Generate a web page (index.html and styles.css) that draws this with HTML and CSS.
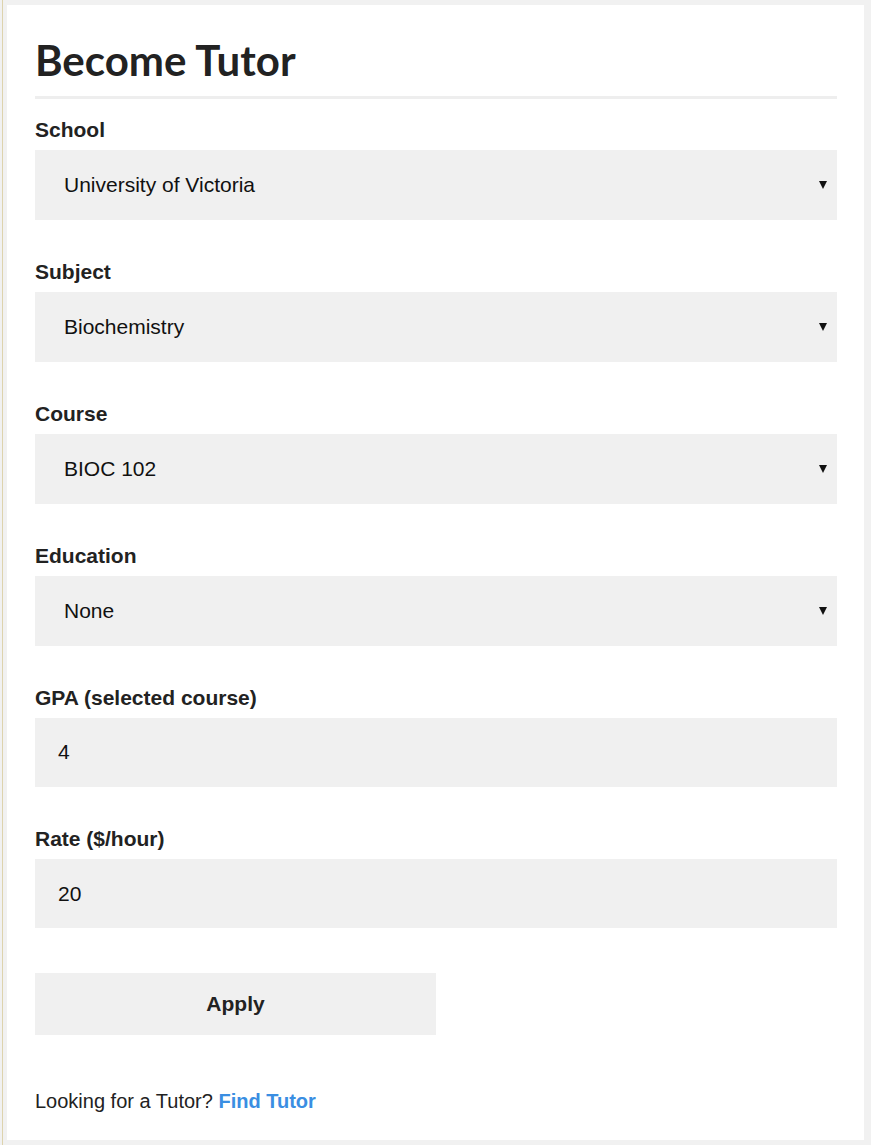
FILE: index.html
```html
<!DOCTYPE html>
<html lang="en">
<head>
<meta charset="utf-8">
<title>Become Tutor</title>
<link rel="stylesheet" href="styles.css">
</head>
<body>
<main class="card">
  <h1 class="title">Become Tutor</h1>
  <form class="form">
    <div class="field">
      <label class="label" for="school">School</label>
      <div class="select-wrap">
        <select id="school" class="control select"><option>University of Victoria</option></select>
      </div>
    </div>
    <div class="field">
      <label class="label" for="subject">Subject</label>
      <div class="select-wrap">
        <select id="subject" class="control select"><option>Biochemistry</option></select>
      </div>
    </div>
    <div class="field">
      <label class="label" for="course">Course</label>
      <div class="select-wrap">
        <select id="course" class="control select"><option>BIOC 102</option></select>
      </div>
    </div>
    <div class="field">
      <label class="label" for="education">Education</label>
      <div class="select-wrap">
        <select id="education" class="control select"><option>None</option></select>
      </div>
    </div>
    <div class="field field-input">
      <label class="label" for="gpa">GPA (selected course)</label>
      <input id="gpa" class="control input" type="text" value="4">
    </div>
    <div class="field field-input">
      <label class="label" for="rate">Rate ($/hour)</label>
      <input id="rate" class="control input" type="text" value="20">
    </div>
    <button class="apply" type="button">Apply</button>
  </form>
  <p class="footer">Looking for a Tutor? <a class="link" href="#">Find Tutor</a></p>
</main>
</body>
</html>
```

FILE: styles.css
```css
html {
  background: #f1f1f1;
}
body {
  margin: 0 0 0 2px;
  border-left: 1px solid #ddd3ad;
  padding: 5px 7px 5px 4px;
  font-family: "Liberation Sans", Arial, sans-serif;
  color: #222;
}
.card {
  background: #fff;
  padding: 30px 27px 27px 28px;
}
.title {
  margin: 0;
  font-family: Lato, "Liberation Sans", sans-serif;
  font-weight: 700;
  font-size: 42px;
  line-height: 1.2;
  color: #222;
  padding-bottom: 11px;
  border-bottom: 3px solid #eeeeee;
}
.form {
  display: flex;
  flex-direction: column;
  padding-top: 18.5px;
}
.field {
  display: flex;
  flex-direction: column;
  gap: 8px;
  margin-bottom: 40px;
}
.field-input {
  margin-bottom: 40.5px;
}
.label {
  display: block;
  font-weight: 700;
  font-size: 21px;
  line-height: 24px;
  color: #222;
}
.select-wrap {
  position: relative;
}
.select-wrap::after {
  content: "";
  position: absolute;
  right: 10px;
  top: 31px;
  width: 0;
  height: 0;
  border-left: 4px solid transparent;
  border-right: 4px solid transparent;
  border-top: 8px solid #111;
  pointer-events: none;
}
.control {
  display: block;
  width: 100%;
  box-sizing: border-box;
  border: 0;
  margin: 0;
  background: #f0f0f0;
  font-family: "Liberation Sans", Arial, sans-serif;
  font-size: 21px;
  color: #111;
  outline: none;
  border-radius: 0;
}
.select {
  -webkit-appearance: none;
  appearance: none;
  height: 70px;
  padding: 0 30px 0 29px;
}
.input {
  height: 69px;
  padding: 0 23px;
}
.apply {
  width: 50%;
  height: 62px;
  margin: 4px 0 0;
  border: 0;
  background: #f0f0f0;
  font-family: "Liberation Sans", Arial, sans-serif;
  font-weight: 700;
  font-size: 21px;
  color: #222;
  cursor: pointer;
}
.footer {
  margin: 55px 0 0;
  font-size: 20px;
  line-height: 23px;
  color: #222;
}
.link {
  color: #3a8ee2;
  font-weight: 700;
  text-decoration: none;
}
```
